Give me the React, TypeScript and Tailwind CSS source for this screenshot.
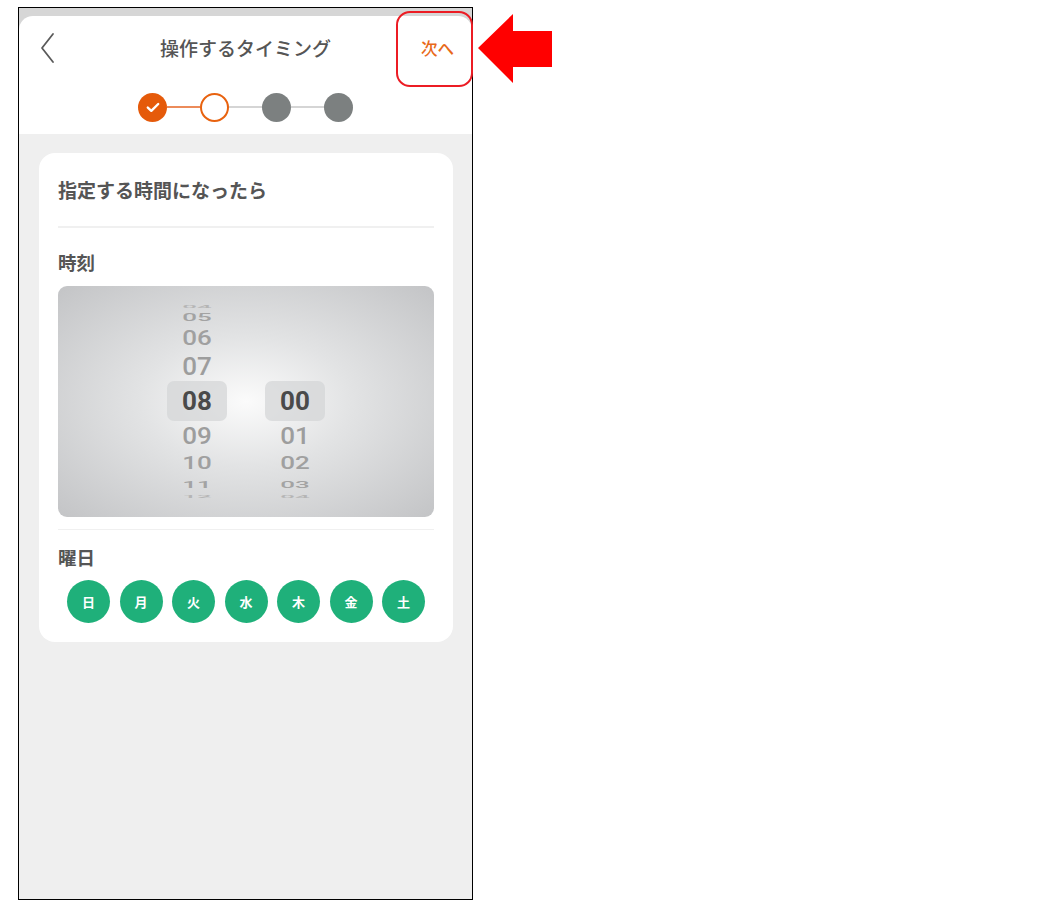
import React from "react";

const FONT = { fontFamily: '"Noto Sans CJK JP", "Noto Sans", sans-serif' };
const NUM = { fontFamily: 'Roboto, "Noto Sans", sans-serif' };

type Row = { t: string; h: number; s: number; c: string; sel?: boolean };

const hours: Row[] = [
  { t: "04", h: 6, s: 0.12, c: "#b5b5b5" },
  { t: "05", h: 15, s: 0.42, c: "#a3a3a3" },
  { t: "06", h: 26, s: 0.78, c: "#a0a0a0" },
  { t: "07", h: 30, s: 0.98, c: "#9d9d9d" },
  { t: "08", h: 40, s: 1, c: "#4a4a4a", sel: true },
  { t: "09", h: 29, s: 0.95, c: "#9d9d9d" },
  { t: "10", h: 25, s: 0.74, c: "#a0a0a0" },
  { t: "11", h: 20, s: 0.34, c: "#a3a3a3" },
  { t: "12", h: 4, s: 0.1, c: "#b5b5b5" },
];

const minutes: Row[] = [
  { t: "", h: 6, s: 0.12, c: "transparent" },
  { t: "", h: 15, s: 0.42, c: "transparent" },
  { t: "", h: 26, s: 0.78, c: "transparent" },
  { t: "", h: 30, s: 0.98, c: "transparent" },
  { t: "00", h: 40, s: 1, c: "#4a4a4a", sel: true },
  { t: "01", h: 29, s: 0.95, c: "#9d9d9d" },
  { t: "02", h: 25, s: 0.74, c: "#a0a0a0" },
  { t: "03", h: 20, s: 0.34, c: "#a3a3a3" },
  { t: "04", h: 4, s: 0.1, c: "#b5b5b5" },
];

function Column({ rows }: { rows: Row[] }) {
  return (
    <div className="flex w-[60px] flex-col items-center">
      {rows.map((r, i) => (
        <div
          key={i}
          className={
            r.sel
              ? "flex w-[60px] items-center justify-center rounded-[7px] bg-[#d3d4d5]/70"
              : "flex w-[60px] items-center justify-center overflow-visible"
          }
          style={{ height: r.h }}
        >
          <span
            className={r.sel ? "text-[26px] font-bold leading-none" : "text-[26px] font-medium leading-none"}
            style={{ ...NUM, color: r.c, transform: `scaleY(${r.s})`, display: "inline-block" }}
          >
            {r.t}
          </span>
        </div>
      ))}
    </div>
  );
}

const days = ["日", "月", "火", "水", "木", "金", "土"];

export default function App() {
  return (
    <div className="relative h-[906px] w-[1058px] overflow-hidden bg-white pl-[18px] pt-[7px]" style={FONT}>
      <div className="flex h-[893px] w-[455px] flex-col border border-black bg-[#efefef]">
        <div className="bg-[#d6d6d6] pt-[8px]">
          <div className="flex h-[118px] flex-col rounded-t-[14px] bg-white">
            <div className="relative flex h-[64px] items-center justify-center">
              <svg className="absolute left-[20px] top-[16px]" width="16" height="32" viewBox="0 0 16 32" fill="none">
                <path d="M14 2 L3 16 L14 30" stroke="#5a5a5a" strokeWidth="1.8" strokeLinecap="round" strokeLinejoin="round" />
              </svg>
              <span className="text-[19px] font-medium text-[#555555]">操作するタイミング</span>
              <span className="absolute right-[18px] text-[16.5px] font-medium text-[#e8691a]">次へ</span>
            </div>
            <div className="flex flex-1 items-center justify-center">
              <div className="flex h-[29px] w-[29px] items-center justify-center rounded-full bg-[#e55a0a]">
                <svg width="14" height="11" viewBox="0 0 14 11" fill="none">
                  <path d="M1.8 5.6 L5.3 8.8 L12.2 2" stroke="white" strokeWidth="2.4" strokeLinecap="round" strokeLinejoin="round" />
                </svg>
              </div>
              <div className="h-[1.5px] w-[33px] bg-[#ec8b5a]" />
              <div className="h-[29px] w-[29px] rounded-full border-[2.5px] border-[#e8620f] bg-white" />
              <div className="h-[1.5px] w-[33px] bg-[#d5d5d5]" />
              <div className="h-[29px] w-[29px] rounded-full bg-[#7c8080]" />
              <div className="h-[1.5px] w-[33px] bg-[#d5d5d5]" />
              <div className="h-[29px] w-[29px] rounded-full bg-[#7c8080]" />
            </div>
          </div>
        </div>

        <div className="flex-1 pl-[20px] pt-[19px]">
          <div className="w-[414px] rounded-[16px] bg-white px-[19px] pb-[19px] pt-[24px]">
            <div className="text-[19px] font-bold leading-[26px] text-[#555555]">指定する時間になったら</div>
            <div className="mt-[23px] h-[1.5px] bg-[#f0f0f0]" />
            <div className="mt-[21px] text-[18.5px] font-bold leading-[26px] text-[#555555]">時刻</div>
            <div className="mt-[11px] flex h-[231px] items-center justify-center gap-[38px] rounded-[9px] bg-[radial-gradient(ellipse_at_center,#fbfbfb_0%,#e2e3e4_40%,#c3c4c6_100%)]">
              <Column rows={hours} />
              <Column rows={minutes} />
            </div>
            <div className="mt-[12px] h-[1.5px] bg-[#f0f0f0]" />
            <div className="mt-[14px] text-[18.5px] font-bold leading-[26px] text-[#555555]">曜日</div>
            <div className="mt-[10px] flex justify-between px-[9px]">
              {days.map((d) => (
                <div key={d} className="flex h-[43px] w-[43px] items-center justify-center rounded-full bg-[#1fb07a] text-[13px] font-bold text-white">
                  {d}
                </div>
              ))}
            </div>
          </div>
        </div>
      </div>

      <div className="absolute left-[396px] top-[11px] h-[76px] w-[77px] rounded-[14px] border-2 border-[#ec1c24]" />
      <svg className="absolute left-[477px] top-[13px]" width="77" height="71" viewBox="0 0 77 71">
        <polygon points="1,35 36,1 36,18 75,18 75,54 36,54 36,70" fill="#ff0000" />
      </svg>
    </div>
  );
}
